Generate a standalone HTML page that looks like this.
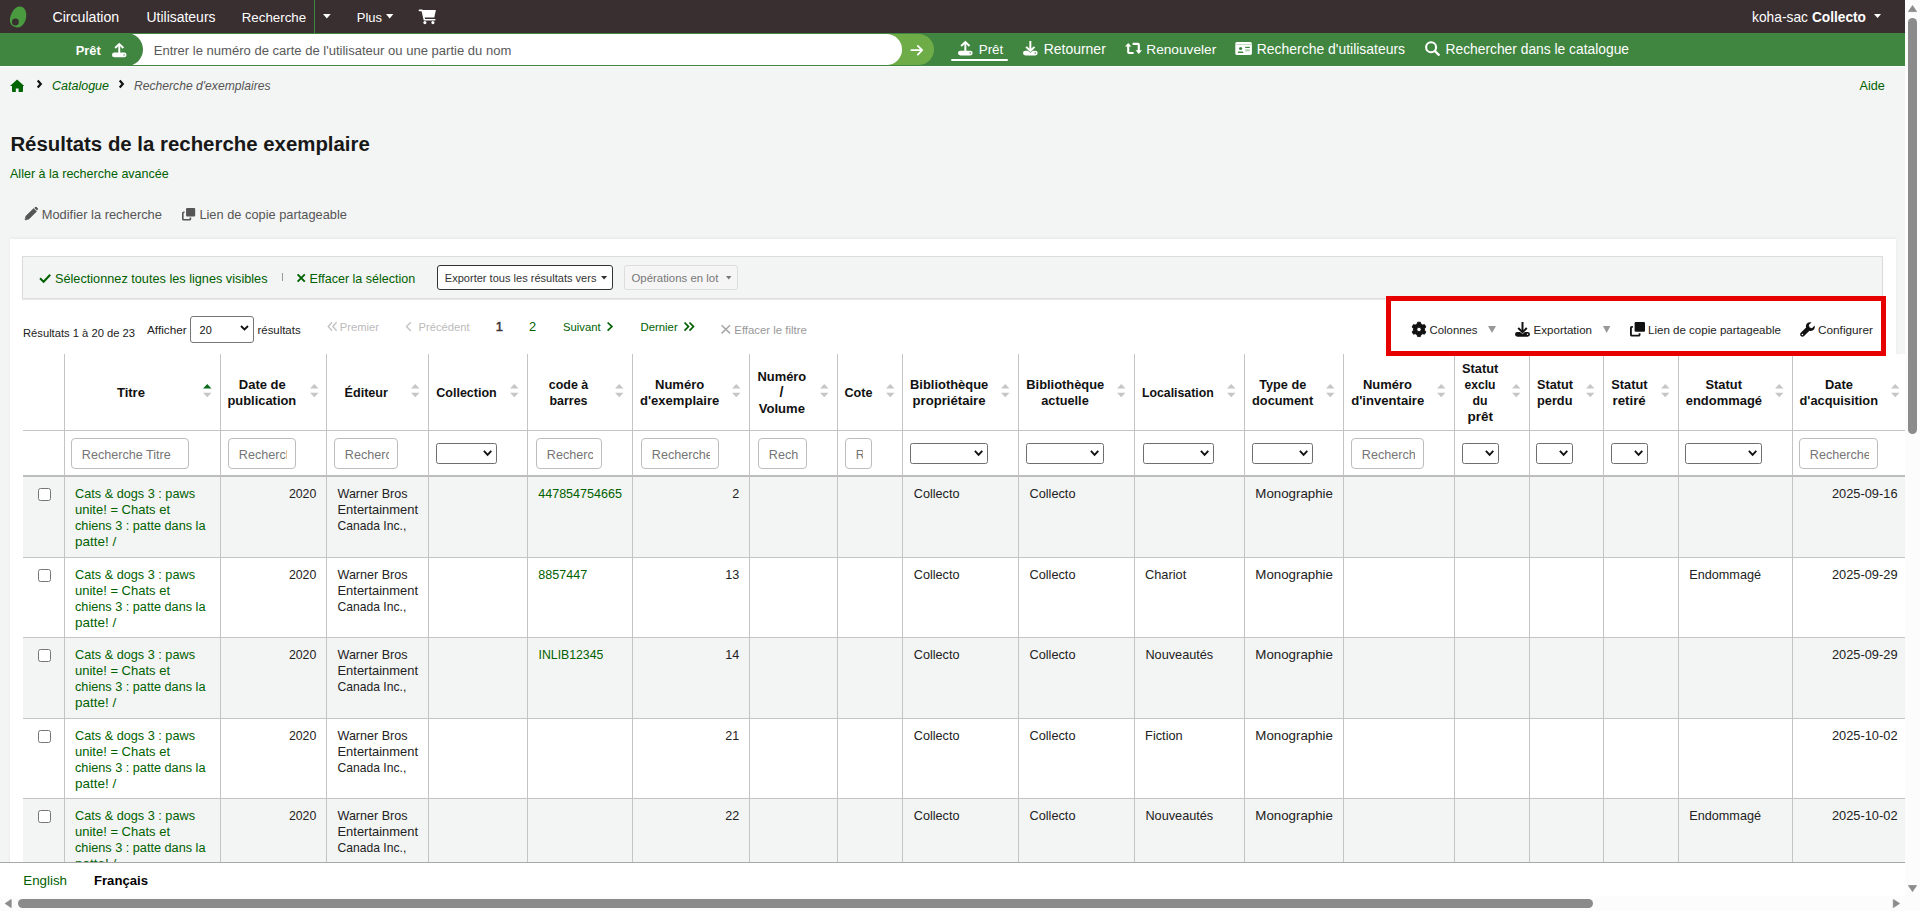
<!DOCTYPE html>
<html><head><meta charset="utf-8"><title>Koha</title>
<style>
html,body{margin:0;padding:0;width:1920px;height:911px;overflow:hidden;background:#f3f4f4;font-family:"Liberation Sans",sans-serif;}
.a{position:absolute;box-sizing:border-box;}
.t{position:absolute;white-space:pre;line-height:1;}
svg.a{overflow:visible;}
text{font-family:"Liberation Sans",sans-serif;white-space:pre;}
</style></head><body>
<div class="a" style="left:0px;top:0px;width:1920px;height:33px;background:#392e30"></div>
<svg class="a" style="left:6px;top:4px;width:24px;height:26px;" viewBox="6 4 24 26"><path d="M20.6 6.6 C24.6 7.3 26.6 11.3 26.3 16 C26 21.6 22.6 27.4 17.6 27.4 C13.2 27.4 10 24.6 9.9 20.6 C9.8 14.2 14.6 5.9 20.6 6.6 Z" fill="#4a9a3f"/><circle cx="15.4" cy="22" r="3.4" fill="#392e30"/></svg>
<svg class="a" style="left:49px;top:5px;width:74px;height:23px" viewBox="49 5 74 23"><text x="52.50" y="22" font-size="14.116" font-weight="normal" font-style="normal" fill="#fff" textLength="66.69" lengthAdjust="spacingAndGlyphs" >Circulation</text></svg>
<svg class="a" style="left:143px;top:5px;width:77px;height:23px" viewBox="143 5 77 23"><text x="146.50" y="22" font-size="13.953" font-weight="normal" font-style="normal" fill="#fff" textLength="69.01" lengthAdjust="spacingAndGlyphs" >Utilisateurs</text></svg>
<svg class="a" style="left:238px;top:5px;width:72px;height:22px" viewBox="238 5 72 22"><text x="241.70" y="22" font-size="13.340" font-weight="normal" font-style="normal" fill="#fff" textLength="64.51" lengthAdjust="spacingAndGlyphs" >Recherche</text></svg>
<svg class="a" style="left:353px;top:6px;width:33px;height:22px" viewBox="353 6 33 22"><text x="356.80" y="22" font-size="12.956" font-weight="normal" font-style="normal" fill="#fff" textLength="25.21" lengthAdjust="spacingAndGlyphs" >Plus</text></svg>
<div class="a" style="left:314px;top:0px;width:1px;height:33px;background:#408540"></div>
<svg class="a" style="left:323.3px;top:14px;width:7.699999999999989px;height:4.5px;" viewBox="0 0 10 5" preserveAspectRatio="none"><path d="M0 0 L10 0 L5 5 Z" fill="#fff"/></svg>
<svg class="a" style="left:386.3px;top:14px;width:7.399999999999977px;height:4.5px;" viewBox="0 0 10 5" preserveAspectRatio="none"><path d="M0 0 L10 0 L5 5 Z" fill="#fff"/></svg>
<svg class="a" style="left:418px;top:8px;width:20px;height:18px;" viewBox="418 8 20 18"><path d="M419.4 10.4 L422.2 10.4 L424.4 19.7 L434.8 19.7" fill="none" stroke="#fff" stroke-width="1.6" stroke-linejoin="round" stroke-linecap="round"/><path d="M422.4 9.9 L435.9 9.9 L434.3 17.6 L424.1 17.6 Z" fill="#fff"/><circle cx="424.9" cy="22.6" r="1.55" fill="#fff"/><circle cx="432.9" cy="22.6" r="1.55" fill="#fff"/></svg>
<svg class="a" style="left:1749px;top:4px;width:63px;height:23px" viewBox="1749 4 63 23"><text x="1752.00" y="21.5" font-size="13.793" font-weight="normal" font-style="normal" fill="#fff" textLength="55.97" lengthAdjust="spacingAndGlyphs" >koha-sac</text></svg>
<svg class="a" style="left:1808px;top:5px;width:62px;height:23px" viewBox="1808 5 62 23"><text x="1811.90" y="21.5" font-size="13.714" font-weight="bold" font-style="normal" fill="#fff" textLength="54.10" lengthAdjust="spacingAndGlyphs" >Collecto</text></svg>
<svg class="a" style="left:1874.4px;top:13.5px;width:7.099999999999909px;height:4.0px;" viewBox="0 0 10 5" preserveAspectRatio="none"><path d="M0 0 L10 0 L5 5 Z" fill="#fff"/></svg>
<div class="a" style="left:0px;top:33px;width:1905px;height:33px;background:#408540"></div>
<div class="a" style="left:0px;top:66px;width:1905px;height:1px;background:#fbfbfb"></div>
<div class="a" style="left:875px;top:34px;width:59px;height:31px;background:#6eac48;border-radius:0 15.5px 15.5px 0"></div>
<div class="a" style="left:130px;top:34px;width:772px;height:31px;background:#fff;border-radius:0 15.5px 15.5px 0"></div>
<div class="a" style="left:0px;top:33px;width:143px;height:33px;background:#408540;border-radius:0 16.5px 16.5px 0"></div>
<svg class="a" style="left:72px;top:39px;width:33px;height:21px" viewBox="72 39 33 21"><text x="75.70" y="54.5" font-size="12.905" font-weight="bold" font-style="normal" fill="#fff" textLength="25.11" lengthAdjust="spacingAndGlyphs" >Prêt</text></svg>
<svg class="a" style="left:112px;top:42.5px;width:14.5px;height:14.5px;" viewBox="0 0 15 15" preserveAspectRatio="none"><path d="M3.2 5.2 L7.5 1.1 L11.8 5.2" fill="none" stroke="#fff" stroke-width="2"/><path d="M7.5 1.5 L7.5 11" stroke="#fff" stroke-width="2"/><rect x="0" y="9.9" width="15" height="4.9" rx="2.45" fill="#fff"/><circle cx="12.5" cy="12.3" r="0.75" fill="#408540"/></svg>
<svg class="a" style="left:150px;top:38px;width:365px;height:22px" viewBox="150 38 365 22"><text x="153.70" y="54.5" font-size="13.037" font-weight="normal" font-style="normal" fill="#595959" textLength="357.59" lengthAdjust="spacingAndGlyphs" >Entrer le numéro de carte de l'utilisateur ou une partie du nom</text></svg>
<svg class="a" style="left:909px;top:44px;width:16px;height:13px;" viewBox="909 44 16 13"><path d="M911.3 50.2 L922 50.2 M917.8 45.8 L922.2 50.2 L917.8 54.6" fill="none" stroke="#fff" stroke-width="1.7" stroke-linecap="round" stroke-linejoin="round"/></svg>
<svg class="a" style="left:958px;top:41.4px;width:14.700000000000045px;height:14.600000000000001px;" viewBox="0 0 15 15" preserveAspectRatio="none"><path d="M3.2 5.2 L7.5 1.1 L11.8 5.2" fill="none" stroke="#fff" stroke-width="2"/><path d="M7.5 1.5 L7.5 11" stroke="#fff" stroke-width="2"/><rect x="0" y="9.9" width="15" height="4.9" rx="2.45" fill="#fff"/><circle cx="12.5" cy="12.3" r="0.75" fill="#408540"/></svg>
<svg class="a" style="left:975px;top:37px;width:32px;height:22px" viewBox="975 37 32 22"><text x="978.75" y="53.75" font-size="13.351" font-weight="normal" font-style="normal" fill="#fff" textLength="24.49" lengthAdjust="spacingAndGlyphs" >Prêt</text></svg>
<div class="a" style="left:951px;top:58.5px;width:57px;height:2.5px;background:#fff;border-radius:2px"></div>
<svg class="a" style="left:1023px;top:41.4px;width:14.700000000000045px;height:14.600000000000001px;" viewBox="0 0 15 15" preserveAspectRatio="none"><path d="M3.2 6 L7.5 10.1 L11.8 6" fill="none" stroke="#fff" stroke-width="2"/><path d="M7.5 0 L7.5 10" stroke="#fff" stroke-width="2"/><path d="M0 12.35 A2.45 2.45 0 0 1 2.45 9.9 L5 9.9 L7.5 12 L10 9.9 L12.55 9.9 A2.45 2.45 0 0 1 12.55 14.8 L2.45 14.8 A2.45 2.45 0 0 1 0 12.35 Z" fill="#fff"/><circle cx="12.5" cy="12.3" r="0.75" fill="#408540"/></svg>
<svg class="a" style="left:1040px;top:37px;width:70px;height:23px" viewBox="1040 37 70 23"><text x="1043.75" y="53.75" font-size="13.948" font-weight="normal" font-style="normal" fill="#fff" textLength="62.03" lengthAdjust="spacingAndGlyphs" >Retourner</text></svg>
<svg class="a" style="left:1124px;top:42px;width:19px;height:13px;" viewBox="1124 42 19 13"><path d="M1125 46.6 L1128.2 42.9 L1131.4 46.6 Z" fill="#fff"/><path d="M1128.2 45.5 L1128.2 52.3 Q1128.2 53 1129 53 L1133.6 53" fill="none" stroke="#fff" stroke-width="2.1"/><path d="M1142 50.2 L1138.8 53.9 L1135.6 50.2 Z" fill="#fff"/><path d="M1132.6 43.9 L1138 43.9 Q1138.8 43.9 1138.8 44.7 L1138.8 51.3" fill="none" stroke="#fff" stroke-width="2.1"/></svg>
<svg class="a" style="left:1143px;top:37px;width:77px;height:23px" viewBox="1143 37 77 23"><text x="1146.25" y="53.75" font-size="13.685" font-weight="normal" font-style="normal" fill="#fff" textLength="69.99" lengthAdjust="spacingAndGlyphs" >Renouveler</text></svg>
<svg class="a" style="left:1234px;top:41px;width:19px;height:15px;" viewBox="1234 41 19 15"><rect x="1235.3" y="42" width="16.6" height="12.9" rx="1.6" fill="#fff"/><rect x="1235.3" y="44.1" width="16.6" height="0.6" fill="#9cc49c"/><circle cx="1240.6" cy="48.5" r="1.6" fill="#408540"/><rect x="1237.8" y="51.6" width="5.6" height="1.4" rx="0.7" fill="#408540"/><rect x="1245.2" y="46.8" width="4.6" height="1.2" fill="#408540"/><rect x="1245.2" y="49.2" width="4.6" height="2.2" fill="#b5d3b5"/></svg>
<svg class="a" style="left:1253px;top:37px;width:156px;height:23px" viewBox="1253 37 156 23"><text x="1256.75" y="53.75" font-size="13.933" font-weight="normal" font-style="normal" fill="#fff" textLength="148.26" lengthAdjust="spacingAndGlyphs" >Recherche d'utilisateurs</text></svg>
<svg class="a" style="left:1423px;top:39px;width:19px;height:19px;" viewBox="1423 39 19 19"><circle cx="1431.1" cy="47.3" r="5" fill="none" stroke="#fff" stroke-width="2.1"/><path d="M1434.9 51.1 L1438.8 54.8" stroke="#fff" stroke-width="2.3" stroke-linecap="round"/></svg>
<svg class="a" style="left:1442px;top:37px;width:191px;height:23px" viewBox="1442 37 191 23"><text x="1445.50" y="53.75" font-size="13.813" font-weight="normal" font-style="normal" fill="#fff" textLength="183.52" lengthAdjust="spacingAndGlyphs" >Rechercher dans le catalogue</text></svg>
<svg class="a" style="left:9px;top:78px;width:17px;height:15px;" viewBox="9 78 17 15"><path d="M17.1 79.6 L24.2 85.9 L23 85.9 L23 91 Q23 91.9 22.1 91.9 L18.6 91.9 L18.6 88.4 L15.8 88.4 L15.8 91.9 L12.9 91.9 Q12 91.9 12 91 L12 85.9 L10 85.9 Z" fill="#006400"/></svg>
<svg class="a" style="left:36.6px;top:80px;width:4.600000000000001px;height:8px;" viewBox="0 0 4 7" preserveAspectRatio="none"><path d="M0.6 0.5 L3.3 3.5 L0.6 6.5" fill="none" stroke="#111" stroke-width="1.9"/></svg>
<svg class="a" style="left:49px;top:75px;width:64px;height:21px" viewBox="49 75 64 21"><text x="52.00" y="90" font-size="12.500" font-weight="normal" font-style="italic" fill="#006100" textLength="56.99" lengthAdjust="spacingAndGlyphs" >Catalogue</text></svg>
<svg class="a" style="left:118.6px;top:80px;width:4.6000000000000085px;height:8px;" viewBox="0 0 4 7" preserveAspectRatio="none"><path d="M0.6 0.5 L3.3 3.5 L0.6 6.5" fill="none" stroke="#111" stroke-width="1.9"/></svg>
<svg class="a" style="left:131px;top:75px;width:144px;height:20px" viewBox="131 75 144 20"><text x="134.00" y="90" font-size="12.133" font-weight="normal" font-style="italic" fill="#555" textLength="136.53" lengthAdjust="spacingAndGlyphs" >Recherche d'exemplaires</text></svg>
<svg class="a" style="left:1856px;top:74px;width:33px;height:21px" viewBox="1856 74 33 21"><text x="1859.60" y="89.8" font-size="12.600" font-weight="normal" font-style="normal" fill="#006100" textLength="25.22" lengthAdjust="spacingAndGlyphs" >Aide</text></svg>
<svg class="a" style="left:7px;top:126px;width:367px;height:34px" viewBox="7 126 367 34"><text x="10.40" y="151.25" font-size="20.397" font-weight="bold" font-style="normal" fill="#181818" textLength="359.41" lengthAdjust="spacingAndGlyphs" >Résultats de la recherche exemplaire</text></svg>
<svg class="a" style="left:7px;top:162px;width:166px;height:21px" viewBox="7 162 166 21"><text x="10.00" y="178" font-size="12.525" font-weight="normal" font-style="normal" fill="#006100" textLength="158.74" lengthAdjust="spacingAndGlyphs" >Aller à la recherche avancée</text></svg>
<svg class="a" style="left:22px;top:205px;width:18px;height:18px;" viewBox="22 205 18 18"><path d="M25 220 L25.9 216.1 L33.6 208.6 L36.5 211.5 L28.9 219.1 Z" fill="#555" stroke="#555" stroke-width="0.6" stroke-linejoin="round"/><path d="M34.3 207.9 L35.2 207.1 Q36 206.5 36.8 207.3 L37.7 208.2 Q38.4 209 37.7 209.8 L36.9 210.6 Z" fill="#555"/></svg>
<svg class="a" style="left:38px;top:203px;width:128px;height:21px" viewBox="38 203 128 21"><text x="41.70" y="219" font-size="12.880" font-weight="normal" font-style="normal" fill="#555" textLength="120.27" lengthAdjust="spacingAndGlyphs" >Modifier la recherche</text></svg>
<svg class="a" style="left:182px;top:207.8px;width:13.199999999999989px;height:12.5px;" viewBox="0 0 13 12.5" preserveAspectRatio="none"><rect x="4" y="0" width="9" height="8.5" rx="1" fill="#555"/><path d="M2.5 4.2 L1.6 4.2 Q0.8 4.2 0.8 5 L0.8 11 Q0.8 11.8 1.6 11.8 L7.5 11.8 Q8.3 11.8 8.3 11 L8.3 9.6" fill="none" stroke="#555" stroke-width="1.6"/></svg>
<svg class="a" style="left:196px;top:203px;width:155px;height:21px" viewBox="196 203 155 21"><text x="199.40" y="219" font-size="12.815" font-weight="normal" font-style="normal" fill="#555" textLength="147.49" lengthAdjust="spacingAndGlyphs" >Lien de copie partageable</text></svg>
<div class="a" style="left:10px;top:239px;width:1886px;height:672px;background:#fff;box-shadow:0 -1px 3px rgba(0,0,0,0.06)"></div>
<div class="a" style="left:22px;top:256px;width:1861px;height:43px;background:#f3f4f4;border:1px solid #dcdcdc;box-shadow:0 1px 1px rgba(0,0,0,0.08)"></div>
<svg class="a" style="left:37px;top:271px;width:16px;height:14px;" viewBox="37 271 16 14"><path d="M40 278.3 L43.6 281.8 L50.2 274.8" fill="none" stroke="#006100" stroke-width="2"/></svg>
<svg class="a" style="left:52px;top:268px;width:220px;height:21px" viewBox="52 268 220 21"><text x="55.00" y="283.3" font-size="12.702" font-weight="normal" font-style="normal" fill="#006100" textLength="212.52" lengthAdjust="spacingAndGlyphs" >Sélectionnez toutes les lignes visibles</text></svg>
<div class="a" style="left:282px;top:272.5px;width:1px;height:8.5px;background:#999"></div>
<svg class="a" style="left:295px;top:272px;width:13px;height:12px;" viewBox="295 272 13 12"><path d="M297.6 274.4 L304.8 281.6 M304.8 274.4 L297.6 281.6" stroke="#006100" stroke-width="1.9"/></svg>
<svg class="a" style="left:306px;top:268px;width:113px;height:21px" viewBox="306 268 113 21"><text x="309.60" y="283.3" font-size="12.527" font-weight="normal" font-style="normal" fill="#006100" textLength="105.61" lengthAdjust="spacingAndGlyphs" >Effacer la sélection</text></svg>
<div class="a" style="left:437px;top:265px;width:176px;height:25px;background:#fff;border:1px solid #333;border-radius:3px"></div>
<svg class="a" style="left:441px;top:269px;width:159px;height:18px" viewBox="441 269 159 18"><text x="444.80" y="282.4" font-size="11.049" font-weight="normal" font-style="normal" fill="#333" textLength="151.68" lengthAdjust="spacingAndGlyphs" >Exporter tous les résultats vers</text></svg>
<svg class="a" style="left:600.8px;top:276px;width:6.2000000000000455px;height:3.5px;" viewBox="0 0 10 5" preserveAspectRatio="none"><path d="M0 0 L10 0 L5 5 Z" fill="#333"/></svg>
<div class="a" style="left:624px;top:265px;width:114px;height:25px;background:#f5f5f5;border:1px solid #ddd;border-radius:3px"></div>
<svg class="a" style="left:628px;top:268px;width:94px;height:19px" viewBox="628 268 94 19"><text x="631.50" y="282.4" font-size="11.399" font-weight="normal" font-style="normal" fill="#777" textLength="86.81" lengthAdjust="spacingAndGlyphs" >Opérations en lot</text></svg>
<svg class="a" style="left:725.5px;top:276px;width:5.5px;height:3.5px;" viewBox="0 0 10 5" preserveAspectRatio="none"><path d="M0 0 L10 0 L5 5 Z" fill="#777"/></svg>
<svg class="a" style="left:20px;top:323px;width:120px;height:19px" viewBox="20 323 120 19"><text x="23.00" y="336.5" font-size="11.194" font-weight="normal" font-style="normal" fill="#222" textLength="112.02" lengthAdjust="spacingAndGlyphs" >Résultats 1 à 20 de 23</text></svg>
<svg class="a" style="left:144px;top:320px;width:47px;height:20px" viewBox="144 320 47 20"><text x="147.00" y="334.4" font-size="11.780" font-weight="normal" font-style="normal" fill="#222" textLength="39.73" lengthAdjust="spacingAndGlyphs" >Afficher</text></svg>
<div class="a" style="left:190px;top:315.5px;width:63.5px;height:27.0px;background:#fff;border:1px solid #767676;border-radius:3px"></div>
<svg class="a" style="left:196px;top:321px;width:20px;height:18px" viewBox="196 321 20 18"><text x="199.60" y="334.4" font-size="10.901" font-weight="normal" font-style="normal" fill="#111" textLength="12.13" lengthAdjust="spacingAndGlyphs" >20</text></svg>
<svg class="a" style="left:240px;top:325px;width:9px;height:6px;" viewBox="0 0 9 6" preserveAspectRatio="none"><path d="M1 1 L4.5 4.5 L8 1" fill="none" stroke="#111" stroke-width="1.8"/></svg>
<svg class="a" style="left:254px;top:320px;width:51px;height:19px" viewBox="254 320 51 19"><text x="257.50" y="334.4" font-size="11.402" font-weight="normal" font-style="normal" fill="#222" textLength="43.09" lengthAdjust="spacingAndGlyphs" >résultats</text></svg>
<svg class="a" style="left:325px;top:320px;width:15px;height:13px;" viewBox="325 320 15 13"><path d="M332 322.3 L328.2 326.5 L332 330.7 M336.6 322.3 L332.8 326.5 L336.6 330.7" fill="none" stroke="#c2c2c2" stroke-width="1.35"/></svg>
<svg class="a" style="left:336px;top:317px;width:47px;height:19px" viewBox="336 317 47 19"><text x="339.70" y="331" font-size="11.229" font-weight="normal" font-style="normal" fill="#bbb" textLength="39.31" lengthAdjust="spacingAndGlyphs" >Premier</text></svg>
<svg class="a" style="left:403px;top:320px;width:11px;height:13px;" viewBox="403 320 11 13"><path d="M410.8 322.3 L406.5 326.6 L410.8 330.9" fill="none" stroke="#c2c2c2" stroke-width="1.35"/></svg>
<svg class="a" style="left:415px;top:317px;width:58px;height:19px" viewBox="415 317 58 19"><text x="418.60" y="331" font-size="11.184" font-weight="normal" font-style="normal" fill="#bbb" textLength="50.99" lengthAdjust="spacingAndGlyphs" >Précédent</text></svg>
<svg class="a" style="left:492px;top:315px;width:15px;height:22px" viewBox="492 315 15 22"><text x="495.80" y="331" font-size="13.000" font-weight="normal" font-style="normal" fill="#3d3535" textLength="7.23" lengthAdjust="spacingAndGlyphs" stroke="#3d3535" stroke-width="0.5">1</text></svg>
<svg class="a" style="left:526px;top:315px;width:15px;height:21px" viewBox="526 315 15 21"><text x="529.00" y="331" font-size="12.800" font-weight="normal" font-style="normal" fill="#006100" textLength="7.12" lengthAdjust="spacingAndGlyphs" >2</text></svg>
<svg class="a" style="left:560px;top:317px;width:45px;height:19px" viewBox="560 317 45 19"><text x="563.00" y="331" font-size="11.274" font-weight="normal" font-style="normal" fill="#006100" textLength="37.61" lengthAdjust="spacingAndGlyphs" >Suivant</text></svg>
<svg class="a" style="left:605px;top:320px;width:10px;height:13px;" viewBox="605 320 10 13"><path d="M607.6 322.5 L611.9 326.6 L607.6 330.7" fill="none" stroke="#006100" stroke-width="1.7"/></svg>
<svg class="a" style="left:637px;top:317px;width:45px;height:19px" viewBox="637 317 45 19"><text x="640.50" y="331" font-size="11.341" font-weight="normal" font-style="normal" fill="#006100" textLength="37.19" lengthAdjust="spacingAndGlyphs" >Dernier</text></svg>
<svg class="a" style="left:682px;top:320px;width:14px;height:13px;" viewBox="682 320 14 13"><path d="M684.5 322.5 L688.5 326.6 L684.5 330.7 M689.5 322.5 L693.5 326.6 L689.5 330.7" fill="none" stroke="#006100" stroke-width="1.7"/></svg>
<svg class="a" style="left:719px;top:322px;width:14px;height:14px;" viewBox="719 322 14 14"><path d="M721.6 325.3 L730 333.4 M730 325.3 L721.6 333.4" stroke="#a8a8a8" stroke-width="1.5"/></svg>
<svg class="a" style="left:731px;top:320px;width:80px;height:19px" viewBox="731 320 80 19"><text x="734.30" y="334.2" font-size="11.388" font-weight="normal" font-style="normal" fill="#999" textLength="72.58" lengthAdjust="spacingAndGlyphs" >Effacer le filtre</text></svg>
<svg class="a" style="left:1410px;top:320px;width:18px;height:19px;" viewBox="1410 320 18 19"><path d="M1417.14 324.01 L1417.61 322.23 L1420.39 322.23 L1420.86 324.01 L1422.74 325.10 L1424.51 324.61 L1425.90 327.02 L1424.60 328.31 L1424.60 330.49 L1425.90 331.78 L1424.51 334.19 L1422.74 333.70 L1420.86 334.79 L1420.39 336.57 L1417.61 336.57 L1417.14 334.79 L1415.26 333.70 L1413.49 334.19 L1412.10 331.78 L1413.40 330.49 L1413.40 328.31 L1412.10 327.02 L1413.49 324.61 L1415.26 325.10 Z M1421.2 329.4 A2.2 2.2 0 1 0 1416.8 329.4 A2.2 2.2 0 1 0 1421.2 329.4 Z" fill="#111" fill-rule="evenodd" stroke="#111" stroke-width="0.9" stroke-linejoin="round"/></svg>
<svg class="a" style="left:1426px;top:320px;width:55px;height:19px" viewBox="1426 320 55 19"><text x="1429.60" y="334" font-size="11.337" font-weight="normal" font-style="normal" fill="#222" textLength="47.90" lengthAdjust="spacingAndGlyphs" >Colonnes</text></svg>
<svg class="a" style="left:1488px;top:325.5px;width:8px;height:7.0px;" viewBox="0 0 10 5" preserveAspectRatio="none"><path d="M0 0 L10 0 L5 5 Z" fill="#999"/></svg>
<svg class="a" style="left:1515px;top:322px;width:15px;height:15px;" viewBox="0 0 15 15" preserveAspectRatio="none"><path d="M3.2 6 L7.5 10.1 L11.8 6" fill="none" stroke="#111" stroke-width="2"/><path d="M7.5 0 L7.5 10" stroke="#111" stroke-width="2"/><path d="M0 12.35 A2.45 2.45 0 0 1 2.45 9.9 L5 9.9 L7.5 12 L10 9.9 L12.55 9.9 A2.45 2.45 0 0 1 12.55 14.8 L2.45 14.8 A2.45 2.45 0 0 1 0 12.35 Z" fill="#111"/><circle cx="12.5" cy="12.3" r="0.75" fill="#fff"/></svg>
<svg class="a" style="left:1530px;top:320px;width:66px;height:19px" viewBox="1530 320 66 19"><text x="1533.60" y="334" font-size="11.542" font-weight="normal" font-style="normal" fill="#222" textLength="58.39" lengthAdjust="spacingAndGlyphs" >Exportation</text></svg>
<svg class="a" style="left:1602.6px;top:325.5px;width:7.400000000000091px;height:7.0px;" viewBox="0 0 10 5" preserveAspectRatio="none"><path d="M0 0 L10 0 L5 5 Z" fill="#999"/></svg>
<svg class="a" style="left:1630px;top:322px;width:15px;height:14.5px;" viewBox="0 0 13 12.5" preserveAspectRatio="none"><rect x="4" y="0" width="9" height="8.5" rx="1" fill="#111"/><path d="M2.5 4.2 L1.6 4.2 Q0.8 4.2 0.8 5 L0.8 11 Q0.8 11.8 1.6 11.8 L7.5 11.8 Q8.3 11.8 8.3 11 L8.3 9.6" fill="none" stroke="#111" stroke-width="1.6"/></svg>
<svg class="a" style="left:1645px;top:320px;width:140px;height:19px" viewBox="1645 320 140 19"><text x="1648.00" y="334" font-size="11.546" font-weight="normal" font-style="normal" fill="#222" textLength="132.90" lengthAdjust="spacingAndGlyphs" >Lien de copie partageable</text></svg>
<svg class="a" style="left:1800px;top:322px;width:15px;height:15px;" viewBox="0 0 15 15" preserveAspectRatio="none"><path d="M14.6 3.6 L12 6.2 L9.6 5.4 L8.8 3 L11.4 0.4 C9.2 -0.4 6.6 0.8 6 3.2 C5.8 4 5.9 4.8 6.1 5.4 L0.8 10.7 C-0.1 11.6 -0.1 13.1 0.8 14 C1.7 14.9 3.2 14.9 4.1 14 L9.4 8.7 C10.2 9 11.1 9 12 8.8 C14.2 8.1 15.4 5.8 14.6 3.6 Z" fill="#111"/><circle cx="2.4" cy="12.5" r="0.8" fill="#fff"/></svg>
<svg class="a" style="left:1815px;top:319px;width:62px;height:20px" viewBox="1815 319 62 20"><text x="1818.00" y="334" font-size="11.777" font-weight="normal" font-style="normal" fill="#222" textLength="54.99" lengthAdjust="spacingAndGlyphs" >Configurer</text></svg>
<div class="a" style="left:23px;top:354px;width:1882px;height:508px;background:#fff"></div>
<div class="a" style="left:23px;top:477px;width:1882px;height:80px;background:#f3f4f4"></div>
<div class="a" style="left:23px;top:638px;width:1882px;height:80px;background:#f3f4f4"></div>
<div class="a" style="left:23px;top:799px;width:1882px;height:63px;background:#f3f4f4"></div>
<div class="a" style="left:64px;top:354px;width:1px;height:508px;background:#c4c4c4"></div>
<div class="a" style="left:220px;top:354px;width:1px;height:508px;background:#c4c4c4"></div>
<div class="a" style="left:326px;top:354px;width:1px;height:508px;background:#c4c4c4"></div>
<div class="a" style="left:428px;top:354px;width:1px;height:508px;background:#c4c4c4"></div>
<div class="a" style="left:527px;top:354px;width:1px;height:508px;background:#c4c4c4"></div>
<div class="a" style="left:632px;top:354px;width:1px;height:508px;background:#c4c4c4"></div>
<div class="a" style="left:749px;top:354px;width:1px;height:508px;background:#c4c4c4"></div>
<div class="a" style="left:837px;top:354px;width:1px;height:508px;background:#c4c4c4"></div>
<div class="a" style="left:902px;top:354px;width:1px;height:508px;background:#c4c4c4"></div>
<div class="a" style="left:1018px;top:354px;width:1px;height:508px;background:#c4c4c4"></div>
<div class="a" style="left:1134px;top:354px;width:1px;height:508px;background:#c4c4c4"></div>
<div class="a" style="left:1244px;top:354px;width:1px;height:508px;background:#c4c4c4"></div>
<div class="a" style="left:1343px;top:354px;width:1px;height:508px;background:#c4c4c4"></div>
<div class="a" style="left:1454px;top:354px;width:1px;height:508px;background:#c4c4c4"></div>
<div class="a" style="left:1529px;top:354px;width:1px;height:508px;background:#c4c4c4"></div>
<div class="a" style="left:1603px;top:354px;width:1px;height:508px;background:#c4c4c4"></div>
<div class="a" style="left:1678px;top:354px;width:1px;height:508px;background:#c4c4c4"></div>
<div class="a" style="left:1792px;top:354px;width:1px;height:508px;background:#c4c4c4"></div>
<div class="a" style="left:23px;top:430px;width:1882px;height:1px;background:#c4c4c4"></div>
<div class="a" style="left:23px;top:475px;width:1882px;height:2px;background:#bdbdbd"></div>
<div class="a" style="left:23px;top:557px;width:1882px;height:1px;background:#c4c4c4"></div>
<div class="a" style="left:23px;top:637px;width:1882px;height:1px;background:#c4c4c4"></div>
<div class="a" style="left:23px;top:718px;width:1882px;height:1px;background:#c4c4c4"></div>
<div class="a" style="left:23px;top:798px;width:1882px;height:1px;background:#c4c4c4"></div>
<svg class="a" style="left:113px;top:380px;width:36px;height:22px" viewBox="113 380 36 22"><text x="116.90" y="396.6" font-size="13.070" font-weight="bold" font-style="normal" fill="#111" textLength="28.09" lengthAdjust="spacingAndGlyphs" >Titre</text></svg>
<svg class="a" style="left:203px;top:384px;width:8.5px;height:13.199999999999989px;" viewBox="0 0 8.5 13.2" preserveAspectRatio="none"><path d="M0 4.5 L4.25 0 L8.5 4.5 Z" fill="#0b6b1e"/><path d="M0 8.7 L8.5 8.7 L4.25 13.2 Z" fill="#c6c6c6"/></svg>
<svg class="a" style="left:235px;top:373px;width:55px;height:22px" viewBox="235 373 55 22"><text x="238.75" y="388.75" font-size="13.019" font-weight="bold" font-style="normal" fill="#111" textLength="47.03" lengthAdjust="spacingAndGlyphs" >Date de</text></svg>
<svg class="a" style="left:224px;top:389px;width:76px;height:21px" viewBox="224 389 76 21"><text x="227.50" y="405" font-size="12.887" font-weight="bold" font-style="normal" fill="#111" textLength="68.73" lengthAdjust="spacingAndGlyphs" >publication</text></svg>
<svg class="a" style="left:309.5px;top:384px;width:8.5px;height:13.199999999999989px;" viewBox="0 0 8.5 13.2" preserveAspectRatio="none"><path d="M0 4.5 L4.25 0 L8.5 4.5 Z" fill="#c6c6c6"/><path d="M0 8.7 L8.5 8.7 L4.25 13.2 Z" fill="#c6c6c6"/></svg>
<svg class="a" style="left:341px;top:381px;width:51px;height:21px" viewBox="341 381 51 21"><text x="344.50" y="397" font-size="12.627" font-weight="bold" font-style="normal" fill="#111" textLength="43.50" lengthAdjust="spacingAndGlyphs" >Éditeur</text></svg>
<svg class="a" style="left:411.25px;top:384px;width:8.5px;height:13.199999999999989px;" viewBox="0 0 8.5 13.2" preserveAspectRatio="none"><path d="M0 4.5 L4.25 0 L8.5 4.5 Z" fill="#c6c6c6"/><path d="M0 8.7 L8.5 8.7 L4.25 13.2 Z" fill="#c6c6c6"/></svg>
<svg class="a" style="left:433px;top:381px;width:68px;height:21px" viewBox="433 381 68 21"><text x="436.25" y="397" font-size="12.513" font-weight="bold" font-style="normal" fill="#111" textLength="60.48" lengthAdjust="spacingAndGlyphs" >Collection</text></svg>
<svg class="a" style="left:510px;top:384px;width:8.5px;height:13.199999999999989px;" viewBox="0 0 8.5 13.2" preserveAspectRatio="none"><path d="M0 4.5 L4.25 0 L8.5 4.5 Z" fill="#c6c6c6"/><path d="M0 8.7 L8.5 8.7 L4.25 13.2 Z" fill="#c6c6c6"/></svg>
<svg class="a" style="left:545px;top:373px;width:47px;height:21px" viewBox="545 373 47 21"><text x="548.75" y="388.75" font-size="12.461" font-weight="bold" font-style="normal" fill="#111" textLength="39.48" lengthAdjust="spacingAndGlyphs" >code à</text></svg>
<svg class="a" style="left:546px;top:390px;width:45px;height:21px" viewBox="546 390 45 21"><text x="549.50" y="405" font-size="12.418" font-weight="bold" font-style="normal" fill="#111" textLength="37.97" lengthAdjust="spacingAndGlyphs" >barres</text></svg>
<svg class="a" style="left:615px;top:384px;width:8.5px;height:13.199999999999989px;" viewBox="0 0 8.5 13.2" preserveAspectRatio="none"><path d="M0 4.5 L4.25 0 L8.5 4.5 Z" fill="#c6c6c6"/><path d="M0 8.7 L8.5 8.7 L4.25 13.2 Z" fill="#c6c6c6"/></svg>
<svg class="a" style="left:652px;top:373px;width:57px;height:22px" viewBox="652 373 57 22"><text x="655.00" y="388.75" font-size="13.029" font-weight="bold" font-style="normal" fill="#111" textLength="49.23" lengthAdjust="spacingAndGlyphs" >Numéro</text></svg>
<svg class="a" style="left:637px;top:389px;width:87px;height:22px" viewBox="637 389 87 22"><text x="640.00" y="405" font-size="13.045" font-weight="bold" font-style="normal" fill="#111" textLength="79.24" lengthAdjust="spacingAndGlyphs" >d'exemplaire</text></svg>
<svg class="a" style="left:732px;top:384px;width:8.5px;height:13.199999999999989px;" viewBox="0 0 8.5 13.2" preserveAspectRatio="none"><path d="M0 4.5 L4.25 0 L8.5 4.5 Z" fill="#c6c6c6"/><path d="M0 8.7 L8.5 8.7 L4.25 13.2 Z" fill="#c6c6c6"/></svg>
<svg class="a" style="left:754px;top:365px;width:56px;height:21px" viewBox="754 365 56 21"><text x="757.50" y="380.75" font-size="12.897" font-weight="bold" font-style="normal" fill="#111" textLength="48.73" lengthAdjust="spacingAndGlyphs" >Numéro</text></svg>
<svg class="a" style="left:776px;top:379px;width:11px;height:24px" viewBox="776 379 11 24"><text x="779.50" y="397" font-size="14.286" font-weight="bold" font-style="normal" fill="#111" textLength="3.97" lengthAdjust="spacingAndGlyphs" >/</text></svg>
<svg class="a" style="left:755px;top:397px;width:54px;height:22px" viewBox="755 397 54 22"><text x="758.75" y="413.25" font-size="13.065" font-weight="bold" font-style="normal" fill="#111" textLength="46.22" lengthAdjust="spacingAndGlyphs" >Volume</text></svg>
<svg class="a" style="left:820px;top:384px;width:8.5px;height:13.199999999999989px;" viewBox="0 0 8.5 13.2" preserveAspectRatio="none"><path d="M0 4.5 L4.25 0 L8.5 4.5 Z" fill="#c6c6c6"/><path d="M0 8.7 L8.5 8.7 L4.25 13.2 Z" fill="#c6c6c6"/></svg>
<svg class="a" style="left:841px;top:381px;width:36px;height:21px" viewBox="841 381 36 21"><text x="844.50" y="397" font-size="12.613" font-weight="bold" font-style="normal" fill="#111" textLength="28.03" lengthAdjust="spacingAndGlyphs" >Cote</text></svg>
<svg class="a" style="left:885.5px;top:384px;width:8.5px;height:13.199999999999989px;" viewBox="0 0 8.5 13.2" preserveAspectRatio="none"><path d="M0 4.5 L4.25 0 L8.5 4.5 Z" fill="#c6c6c6"/><path d="M0 8.7 L8.5 8.7 L4.25 13.2 Z" fill="#c6c6c6"/></svg>
<svg class="a" style="left:907px;top:373px;width:86px;height:21px" viewBox="907 373 86 21"><text x="910.00" y="388.75" font-size="12.923" font-weight="bold" font-style="normal" fill="#111" textLength="78.25" lengthAdjust="spacingAndGlyphs" >Bibliothèque</text></svg>
<svg class="a" style="left:909px;top:389px;width:81px;height:22px" viewBox="909 389 81 22"><text x="912.50" y="405" font-size="13.141" font-weight="bold" font-style="normal" fill="#111" textLength="73.03" lengthAdjust="spacingAndGlyphs" >propriétaire</text></svg>
<svg class="a" style="left:1001px;top:384px;width:8.5px;height:13.199999999999989px;" viewBox="0 0 8.5 13.2" preserveAspectRatio="none"><path d="M0 4.5 L4.25 0 L8.5 4.5 Z" fill="#c6c6c6"/><path d="M0 8.7 L8.5 8.7 L4.25 13.2 Z" fill="#c6c6c6"/></svg>
<svg class="a" style="left:1023px;top:373px;width:86px;height:21px" viewBox="1023 373 86 21"><text x="1026.25" y="388.75" font-size="12.882" font-weight="bold" font-style="normal" fill="#111" textLength="78.00" lengthAdjust="spacingAndGlyphs" >Bibliothèque</text></svg>
<svg class="a" style="left:1038px;top:389px;width:55px;height:21px" viewBox="1038 389 55 21"><text x="1041.25" y="405" font-size="12.752" font-weight="bold" font-style="normal" fill="#111" textLength="47.49" lengthAdjust="spacingAndGlyphs" >actuelle</text></svg>
<svg class="a" style="left:1117px;top:384px;width:8.5px;height:13.199999999999989px;" viewBox="0 0 8.5 13.2" preserveAspectRatio="none"><path d="M0 4.5 L4.25 0 L8.5 4.5 Z" fill="#c6c6c6"/><path d="M0 8.7 L8.5 8.7 L4.25 13.2 Z" fill="#c6c6c6"/></svg>
<svg class="a" style="left:1139px;top:382px;width:79px;height:20px" viewBox="1139 382 79 20"><text x="1142.00" y="397" font-size="12.296" font-weight="bold" font-style="normal" fill="#111" textLength="71.75" lengthAdjust="spacingAndGlyphs" >Localisation</text></svg>
<svg class="a" style="left:1227px;top:384px;width:8.5px;height:13.199999999999989px;" viewBox="0 0 8.5 13.2" preserveAspectRatio="none"><path d="M0 4.5 L4.25 0 L8.5 4.5 Z" fill="#c6c6c6"/><path d="M0 8.7 L8.5 8.7 L4.25 13.2 Z" fill="#c6c6c6"/></svg>
<svg class="a" style="left:1256px;top:373px;width:54px;height:21px" viewBox="1256 373 54 21"><text x="1259.25" y="388.75" font-size="12.686" font-weight="bold" font-style="normal" fill="#111" textLength="47.00" lengthAdjust="spacingAndGlyphs" >Type de</text></svg>
<svg class="a" style="left:1249px;top:389px;width:69px;height:21px" viewBox="1249 389 69 21"><text x="1252.00" y="405" font-size="12.814" font-weight="bold" font-style="normal" fill="#111" textLength="61.22" lengthAdjust="spacingAndGlyphs" >document</text></svg>
<svg class="a" style="left:1326.25px;top:384px;width:8.5px;height:13.199999999999989px;" viewBox="0 0 8.5 13.2" preserveAspectRatio="none"><path d="M0 4.5 L4.25 0 L8.5 4.5 Z" fill="#c6c6c6"/><path d="M0 8.7 L8.5 8.7 L4.25 13.2 Z" fill="#c6c6c6"/></svg>
<svg class="a" style="left:1360px;top:373px;width:56px;height:22px" viewBox="1360 373 56 22"><text x="1363.00" y="388.75" font-size="12.963" font-weight="bold" font-style="normal" fill="#111" textLength="48.98" lengthAdjust="spacingAndGlyphs" >Numéro</text></svg>
<svg class="a" style="left:1348px;top:389px;width:80px;height:22px" viewBox="1348 389 80 22"><text x="1351.25" y="405" font-size="13.094" font-weight="bold" font-style="normal" fill="#111" textLength="72.97" lengthAdjust="spacingAndGlyphs" >d'inventaire</text></svg>
<svg class="a" style="left:1437px;top:384px;width:8.5px;height:13.199999999999989px;" viewBox="0 0 8.5 13.2" preserveAspectRatio="none"><path d="M0 4.5 L4.25 0 L8.5 4.5 Z" fill="#c6c6c6"/><path d="M0 8.7 L8.5 8.7 L4.25 13.2 Z" fill="#c6c6c6"/></svg>
<svg class="a" style="left:1459px;top:357px;width:44px;height:21px" viewBox="1459 357 44 21"><text x="1462.00" y="372.5" font-size="12.787" font-weight="bold" font-style="normal" fill="#111" textLength="36.23" lengthAdjust="spacingAndGlyphs" >Statut</text></svg>
<svg class="a" style="left:1461px;top:374px;width:39px;height:20px" viewBox="1461 374 39 20"><text x="1464.50" y="388.75" font-size="12.133" font-weight="bold" font-style="normal" fill="#111" textLength="31.03" lengthAdjust="spacingAndGlyphs" >exclu</text></svg>
<svg class="a" style="left:1469px;top:390px;width:23px;height:20px" viewBox="1469 390 23 20"><text x="1472.50" y="405" font-size="12.295" font-weight="bold" font-style="normal" fill="#111" textLength="15.02" lengthAdjust="spacingAndGlyphs" >du</text></svg>
<svg class="a" style="left:1464px;top:405px;width:33px;height:22px" viewBox="1464 405 33 22"><text x="1467.50" y="421.25" font-size="13.492" font-weight="bold" font-style="normal" fill="#111" textLength="25.49" lengthAdjust="spacingAndGlyphs" >prêt</text></svg>
<svg class="a" style="left:1512px;top:384px;width:8.5px;height:13.199999999999989px;" viewBox="0 0 8.5 13.2" preserveAspectRatio="none"><path d="M0 4.5 L4.25 0 L8.5 4.5 Z" fill="#c6c6c6"/><path d="M0 8.7 L8.5 8.7 L4.25 13.2 Z" fill="#c6c6c6"/></svg>
<svg class="a" style="left:1534px;top:373px;width:43px;height:21px" viewBox="1534 373 43 21"><text x="1537.00" y="388.75" font-size="12.698" font-weight="bold" font-style="normal" fill="#111" textLength="35.98" lengthAdjust="spacingAndGlyphs" >Statut</text></svg>
<svg class="a" style="left:1534px;top:389px;width:43px;height:21px" viewBox="1534 389 43 21"><text x="1537.00" y="405" font-size="12.770" font-weight="bold" font-style="normal" fill="#111" textLength="35.47" lengthAdjust="spacingAndGlyphs" >perdu</text></svg>
<svg class="a" style="left:1586.25px;top:384px;width:8.5px;height:13.199999999999989px;" viewBox="0 0 8.5 13.2" preserveAspectRatio="none"><path d="M0 4.5 L4.25 0 L8.5 4.5 Z" fill="#c6c6c6"/><path d="M0 8.7 L8.5 8.7 L4.25 13.2 Z" fill="#c6c6c6"/></svg>
<svg class="a" style="left:1608px;top:373px;width:44px;height:21px" viewBox="1608 373 44 21"><text x="1611.25" y="388.75" font-size="12.787" font-weight="bold" font-style="normal" fill="#111" textLength="36.23" lengthAdjust="spacingAndGlyphs" >Statut</text></svg>
<svg class="a" style="left:1609px;top:389px;width:41px;height:22px" viewBox="1609 389 41 22"><text x="1612.50" y="405" font-size="13.300" font-weight="bold" font-style="normal" fill="#111" textLength="33.27" lengthAdjust="spacingAndGlyphs" >retiré</text></svg>
<svg class="a" style="left:1660.75px;top:384px;width:8.5px;height:13.199999999999989px;" viewBox="0 0 8.5 13.2" preserveAspectRatio="none"><path d="M0 4.5 L4.25 0 L8.5 4.5 Z" fill="#c6c6c6"/><path d="M0 8.7 L8.5 8.7 L4.25 13.2 Z" fill="#c6c6c6"/></svg>
<svg class="a" style="left:1702px;top:373px;width:44px;height:21px" viewBox="1702 373 44 21"><text x="1705.50" y="388.75" font-size="12.875" font-weight="bold" font-style="normal" fill="#111" textLength="36.48" lengthAdjust="spacingAndGlyphs" >Statut</text></svg>
<svg class="a" style="left:1682px;top:389px;width:84px;height:22px" viewBox="1682 389 84 22"><text x="1685.75" y="405" font-size="12.946" font-weight="bold" font-style="normal" fill="#111" textLength="76.25" lengthAdjust="spacingAndGlyphs" >endommagé</text></svg>
<svg class="a" style="left:1775px;top:384px;width:8.5px;height:13.199999999999989px;" viewBox="0 0 8.5 13.2" preserveAspectRatio="none"><path d="M0 4.5 L4.25 0 L8.5 4.5 Z" fill="#c6c6c6"/><path d="M0 8.7 L8.5 8.7 L4.25 13.2 Z" fill="#c6c6c6"/></svg>
<svg class="a" style="left:1822px;top:373px;width:35px;height:21px" viewBox="1822 373 35 21"><text x="1825.00" y="388.75" font-size="12.903" font-weight="bold" font-style="normal" fill="#111" textLength="27.97" lengthAdjust="spacingAndGlyphs" >Date</text></svg>
<svg class="a" style="left:1796px;top:389px;width:86px;height:21px" viewBox="1796 389 86 21"><text x="1799.50" y="405" font-size="12.816" font-weight="bold" font-style="normal" fill="#111" textLength="78.53" lengthAdjust="spacingAndGlyphs" >d'acquisition</text></svg>
<svg class="a" style="left:1891px;top:384px;width:8.5px;height:13.199999999999989px;" viewBox="0 0 8.5 13.2" preserveAspectRatio="none"><path d="M0 4.5 L4.25 0 L8.5 4.5 Z" fill="#c6c6c6"/><path d="M0 8.7 L8.5 8.7 L4.25 13.2 Z" fill="#c6c6c6"/></svg>
<div class="a" style="left:71.4px;top:438px;width:118.1px;height:31px;background:#fff;border:1px solid #bdbdbd;border-radius:4px;overflow:hidden"></div>
<div class="a" style="left:72.4px;top:439px;width:108.1px;height:29px;overflow:hidden">
<svg class="a" style="left:6px;top:4px;width:96px;height:21px" viewBox="6 4 96 21"><text x="9.80" y="20" font-size="12.600" font-weight="normal" font-style="normal" fill="#757575" textLength="88.94" lengthAdjust="spacingAndGlyphs" >Recherche Titre</text></svg>
</div>
<div class="a" style="left:227.5px;top:438px;width:68.0px;height:31px;background:#fff;border:1px solid #bdbdbd;border-radius:4px;overflow:hidden"></div>
<div class="a" style="left:228.5px;top:439px;width:58.0px;height:29px;overflow:hidden">
<svg class="a" style="left:6px;top:4px;width:180px;height:21px" viewBox="6 4 180 21"><text x="9.80" y="20" font-size="12.600" font-weight="normal" font-style="normal" fill="#757575" textLength="172.31" lengthAdjust="spacingAndGlyphs" >Recherche Date de publication</text></svg>
</div>
<div class="a" style="left:334.25px;top:438px;width:63.25px;height:31px;background:#fff;border:1px solid #bdbdbd;border-radius:4px;overflow:hidden"></div>
<div class="a" style="left:335.25px;top:439px;width:53.25px;height:29px;overflow:hidden">
<svg class="a" style="left:6px;top:4px;width:112px;height:21px" viewBox="6 4 112 21"><text x="9.80" y="20" font-size="12.600" font-weight="normal" font-style="normal" fill="#757575" textLength="104.36" lengthAdjust="spacingAndGlyphs" >Recherche Éditeur</text></svg>
</div>
<div class="a" style="left:535.5px;top:438px;width:66.0px;height:31px;background:#fff;border:1px solid #bdbdbd;border-radius:4px;overflow:hidden"></div>
<div class="a" style="left:536.5px;top:439px;width:56.0px;height:29px;overflow:hidden">
<svg class="a" style="left:6px;top:4px;width:149px;height:21px" viewBox="6 4 149 21"><text x="9.80" y="20" font-size="12.600" font-weight="normal" font-style="normal" fill="#757575" textLength="141.48" lengthAdjust="spacingAndGlyphs" >Recherche code à barres</text></svg>
</div>
<div class="a" style="left:640.5px;top:438px;width:78.25px;height:31px;background:#fff;border:1px solid #bdbdbd;border-radius:4px;overflow:hidden"></div>
<div class="a" style="left:641.5px;top:439px;width:68.25px;height:29px;overflow:hidden">
<svg class="a" style="left:6px;top:4px;width:117px;height:21px" viewBox="6 4 117 21"><text x="9.80" y="20" font-size="12.600" font-weight="normal" font-style="normal" fill="#757575" textLength="109.25" lengthAdjust="spacingAndGlyphs" >Recherche Numéro</text></svg>
</div>
<div class="a" style="left:757.5px;top:438px;width:49.0px;height:31px;background:#fff;border:1px solid #bdbdbd;border-radius:4px;overflow:hidden"></div>
<div class="a" style="left:758.5px;top:439px;width:39.0px;height:29px;overflow:hidden">
<svg class="a" style="left:6px;top:4px;width:68px;height:21px" viewBox="6 4 68 21"><text x="9.80" y="20" font-size="12.600" font-weight="normal" font-style="normal" fill="#757575" textLength="60.93" lengthAdjust="spacingAndGlyphs" >Recherche</text></svg>
</div>
<div class="a" style="left:844.5px;top:438px;width:27.0px;height:31px;background:#fff;border:1px solid #bdbdbd;border-radius:4px;overflow:hidden"></div>
<div class="a" style="left:845.5px;top:439px;width:17.0px;height:29px;overflow:hidden">
<svg class="a" style="left:6px;top:4px;width:68px;height:21px" viewBox="6 4 68 21"><text x="9.80" y="20" font-size="12.600" font-weight="normal" font-style="normal" fill="#757575" textLength="60.93" lengthAdjust="spacingAndGlyphs" >Recherche</text></svg>
</div>
<div class="a" style="left:1351.25px;top:438px;width:72.5px;height:31px;background:#fff;border:1px solid #bdbdbd;border-radius:4px;overflow:hidden"></div>
<div class="a" style="left:1352.25px;top:439px;width:62.5px;height:29px;overflow:hidden">
<svg class="a" style="left:6px;top:4px;width:117px;height:21px" viewBox="6 4 117 21"><text x="9.80" y="20" font-size="12.600" font-weight="normal" font-style="normal" fill="#757575" textLength="109.25" lengthAdjust="spacingAndGlyphs" >Recherche Numéro</text></svg>
</div>
<div class="a" style="left:1799.25px;top:438px;width:78.25px;height:31px;background:#fff;border:1px solid #bdbdbd;border-radius:4px;overflow:hidden"></div>
<div class="a" style="left:1800.25px;top:439px;width:68.25px;height:29px;overflow:hidden">
<svg class="a" style="left:6px;top:4px;width:99px;height:21px" viewBox="6 4 99 21"><text x="9.80" y="20" font-size="12.600" font-weight="normal" font-style="normal" fill="#757575" textLength="91.05" lengthAdjust="spacingAndGlyphs" >Recherche Date</text></svg>
</div>
<div class="a" style="left:436.25px;top:443px;width:60.5px;height:21px;background:#fff;border:1px solid #6f6f6f;border-radius:2.5px"></div>
<svg class="a" style="left:482.95px;top:449.9px;width:9.199999999999989px;height:6.400000000000034px;" viewBox="0 0 9.2 6.4" preserveAspectRatio="none"><path d="M0.9 0.9 L4.6 4.8 L8.3 0.9" fill="none" stroke="#111" stroke-width="1.9"/></svg>
<div class="a" style="left:910px;top:443px;width:77.5px;height:21px;background:#fff;border:1px solid #6f6f6f;border-radius:2.5px"></div>
<svg class="a" style="left:973.7px;top:449.9px;width:9.199999999999932px;height:6.400000000000034px;" viewBox="0 0 9.2 6.4" preserveAspectRatio="none"><path d="M0.9 0.9 L4.6 4.8 L8.3 0.9" fill="none" stroke="#111" stroke-width="1.9"/></svg>
<div class="a" style="left:1026.25px;top:443px;width:77.5px;height:21px;background:#fff;border:1px solid #6f6f6f;border-radius:2.5px"></div>
<svg class="a" style="left:1089.95px;top:449.9px;width:9.200000000000045px;height:6.400000000000034px;" viewBox="0 0 9.2 6.4" preserveAspectRatio="none"><path d="M0.9 0.9 L4.6 4.8 L8.3 0.9" fill="none" stroke="#111" stroke-width="1.9"/></svg>
<div class="a" style="left:1142.5px;top:443px;width:71.25px;height:21px;background:#fff;border:1px solid #6f6f6f;border-radius:2.5px"></div>
<svg class="a" style="left:1199.95px;top:449.9px;width:9.200000000000045px;height:6.400000000000034px;" viewBox="0 0 9.2 6.4" preserveAspectRatio="none"><path d="M0.9 0.9 L4.6 4.8 L8.3 0.9" fill="none" stroke="#111" stroke-width="1.9"/></svg>
<div class="a" style="left:1252px;top:443px;width:60.5px;height:21px;background:#fff;border:1px solid #6f6f6f;border-radius:2.5px"></div>
<svg class="a" style="left:1298.7px;top:449.9px;width:9.200000000000045px;height:6.400000000000034px;" viewBox="0 0 9.2 6.4" preserveAspectRatio="none"><path d="M0.9 0.9 L4.6 4.8 L8.3 0.9" fill="none" stroke="#111" stroke-width="1.9"/></svg>
<div class="a" style="left:1462px;top:443px;width:36.75px;height:21px;background:#fff;border:1px solid #6f6f6f;border-radius:2.5px"></div>
<svg class="a" style="left:1484.95px;top:449.9px;width:9.200000000000045px;height:6.400000000000034px;" viewBox="0 0 9.2 6.4" preserveAspectRatio="none"><path d="M0.9 0.9 L4.6 4.8 L8.3 0.9" fill="none" stroke="#111" stroke-width="1.9"/></svg>
<div class="a" style="left:1536.25px;top:443px;width:36.25px;height:21px;background:#fff;border:1px solid #6f6f6f;border-radius:2.5px"></div>
<svg class="a" style="left:1558.7px;top:449.9px;width:9.200000000000045px;height:6.400000000000034px;" viewBox="0 0 9.2 6.4" preserveAspectRatio="none"><path d="M0.9 0.9 L4.6 4.8 L8.3 0.9" fill="none" stroke="#111" stroke-width="1.9"/></svg>
<div class="a" style="left:1611.25px;top:443px;width:36.25px;height:21px;background:#fff;border:1px solid #6f6f6f;border-radius:2.5px"></div>
<svg class="a" style="left:1633.7px;top:449.9px;width:9.200000000000045px;height:6.400000000000034px;" viewBox="0 0 9.2 6.4" preserveAspectRatio="none"><path d="M0.9 0.9 L4.6 4.8 L8.3 0.9" fill="none" stroke="#111" stroke-width="1.9"/></svg>
<div class="a" style="left:1685px;top:443px;width:76.75px;height:21px;background:#fff;border:1px solid #6f6f6f;border-radius:2.5px"></div>
<svg class="a" style="left:1747.95px;top:449.9px;width:9.200000000000045px;height:6.400000000000034px;" viewBox="0 0 9.2 6.4" preserveAspectRatio="none"><path d="M0.9 0.9 L4.6 4.8 L8.3 0.9" fill="none" stroke="#111" stroke-width="1.9"/></svg>
<div class="a" style="left:38px;top:488px;width:13px;height:13px;background:#fff;border:1px solid #767676;border-radius:2.5px"></div>
<svg class="a" style="left:72px;top:482px;width:127px;height:21px" viewBox="72 482 127 21"><text x="75.00" y="498" font-size="12.698" font-weight="normal" font-style="normal" fill="#006100" textLength="119.99" lengthAdjust="spacingAndGlyphs" >Cats &amp; dogs 3 : paws</text></svg>
<svg class="a" style="left:72px;top:498px;width:103px;height:22px" viewBox="72 498 103 22"><text x="75.00" y="514" font-size="12.996" font-weight="normal" font-style="normal" fill="#006100" textLength="95.00" lengthAdjust="spacingAndGlyphs" >unite! = Chats et</text></svg>
<svg class="a" style="left:72px;top:514px;width:138px;height:21px" viewBox="72 514 138 21"><text x="75.00" y="530" font-size="12.682" font-weight="normal" font-style="normal" fill="#006100" textLength="130.43" lengthAdjust="spacingAndGlyphs" >chiens 3 : patte dans la</text></svg>
<svg class="a" style="left:72px;top:529px;width:49px;height:22px" viewBox="72 529 49 22"><text x="75.00" y="546" font-size="13.480" font-weight="normal" font-style="normal" fill="#006100" textLength="41.22" lengthAdjust="spacingAndGlyphs" >patte! /</text></svg>
<svg class="a" style="left:285px;top:483px;width:35px;height:20px" viewBox="285 483 35 20"><text x="288.90" y="498" font-size="12.315" font-weight="normal" font-style="normal" fill="#222" textLength="27.40" lengthAdjust="spacingAndGlyphs" >2020</text></svg>
<svg class="a" style="left:334px;top:482px;width:78px;height:21px" viewBox="334 482 78 21"><text x="337.50" y="498" font-size="12.556" font-weight="normal" font-style="normal" fill="#222" textLength="70.00" lengthAdjust="spacingAndGlyphs" >Warner Bros</text></svg>
<svg class="a" style="left:334px;top:498px;width:88px;height:21px" viewBox="334 498 88 21"><text x="337.50" y="514" font-size="12.932" font-weight="normal" font-style="normal" fill="#222" textLength="80.51" lengthAdjust="spacingAndGlyphs" >Entertainment</text></svg>
<svg class="a" style="left:334px;top:515px;width:76px;height:20px" viewBox="334 515 76 20"><text x="337.50" y="530" font-size="12.125" font-weight="normal" font-style="normal" fill="#222" textLength="68.76" lengthAdjust="spacingAndGlyphs" >Canada Inc.,</text></svg>
<svg class="a" style="left:535px;top:482px;width:91px;height:21px" viewBox="535 482 91 21"><text x="538.20" y="498" font-size="12.554" font-weight="normal" font-style="normal" fill="#006100" textLength="83.79" lengthAdjust="spacingAndGlyphs" >447854754665</text></svg>
<svg class="a" style="left:729px;top:482px;width:15px;height:21px" viewBox="729 482 15 21"><text x="732.26" y="498" font-size="12.600" font-weight="normal" font-style="normal" fill="#222" textLength="7.01" lengthAdjust="spacingAndGlyphs" >2</text></svg>
<svg class="a" style="left:910px;top:482px;width:53px;height:21px" viewBox="910 482 53 21"><text x="913.75" y="498" font-size="12.656" font-weight="normal" font-style="normal" fill="#222" textLength="45.72" lengthAdjust="spacingAndGlyphs" >Collecto</text></svg>
<svg class="a" style="left:1026px;top:482px;width:53px;height:21px" viewBox="1026 482 53 21"><text x="1029.50" y="498" font-size="12.725" font-weight="normal" font-style="normal" fill="#222" textLength="45.97" lengthAdjust="spacingAndGlyphs" >Collecto</text></svg>
<svg class="a" style="left:1252px;top:482px;width:85px;height:22px" viewBox="1252 482 85 22"><text x="1255.30" y="498" font-size="13.305" font-weight="normal" font-style="normal" fill="#222" textLength="77.67" lengthAdjust="spacingAndGlyphs" >Monographie</text></svg>
<svg class="a" style="left:1829px;top:482px;width:73px;height:21px" viewBox="1829 482 73 21"><text x="1832.00" y="498" font-size="12.805" font-weight="normal" font-style="normal" fill="#222" textLength="65.51" lengthAdjust="spacingAndGlyphs" >2025-09-16</text></svg>
<div class="a" style="left:38px;top:569px;width:13px;height:13px;background:#fff;border:1px solid #767676;border-radius:2.5px"></div>
<svg class="a" style="left:72px;top:563px;width:127px;height:21px" viewBox="72 563 127 21"><text x="75.00" y="579" font-size="12.698" font-weight="normal" font-style="normal" fill="#006100" textLength="119.99" lengthAdjust="spacingAndGlyphs" >Cats &amp; dogs 3 : paws</text></svg>
<svg class="a" style="left:72px;top:579px;width:103px;height:22px" viewBox="72 579 103 22"><text x="75.00" y="595" font-size="12.996" font-weight="normal" font-style="normal" fill="#006100" textLength="95.00" lengthAdjust="spacingAndGlyphs" >unite! = Chats et</text></svg>
<svg class="a" style="left:72px;top:595px;width:138px;height:21px" viewBox="72 595 138 21"><text x="75.00" y="611" font-size="12.682" font-weight="normal" font-style="normal" fill="#006100" textLength="130.43" lengthAdjust="spacingAndGlyphs" >chiens 3 : patte dans la</text></svg>
<svg class="a" style="left:72px;top:610px;width:49px;height:22px" viewBox="72 610 49 22"><text x="75.00" y="627" font-size="13.480" font-weight="normal" font-style="normal" fill="#006100" textLength="41.22" lengthAdjust="spacingAndGlyphs" >patte! /</text></svg>
<svg class="a" style="left:285px;top:564px;width:35px;height:20px" viewBox="285 564 35 20"><text x="288.90" y="579" font-size="12.315" font-weight="normal" font-style="normal" fill="#222" textLength="27.40" lengthAdjust="spacingAndGlyphs" >2020</text></svg>
<svg class="a" style="left:334px;top:563px;width:78px;height:21px" viewBox="334 563 78 21"><text x="337.50" y="579" font-size="12.556" font-weight="normal" font-style="normal" fill="#222" textLength="70.00" lengthAdjust="spacingAndGlyphs" >Warner Bros</text></svg>
<svg class="a" style="left:334px;top:579px;width:88px;height:21px" viewBox="334 579 88 21"><text x="337.50" y="595" font-size="12.932" font-weight="normal" font-style="normal" fill="#222" textLength="80.51" lengthAdjust="spacingAndGlyphs" >Entertainment</text></svg>
<svg class="a" style="left:334px;top:596px;width:76px;height:20px" viewBox="334 596 76 20"><text x="337.50" y="611" font-size="12.125" font-weight="normal" font-style="normal" fill="#222" textLength="68.76" lengthAdjust="spacingAndGlyphs" >Canada Inc.,</text></svg>
<svg class="a" style="left:535px;top:563px;width:56px;height:21px" viewBox="535 563 56 21"><text x="538.20" y="579" font-size="12.580" font-weight="normal" font-style="normal" fill="#006100" textLength="48.98" lengthAdjust="spacingAndGlyphs" >8857447</text></svg>
<svg class="a" style="left:722px;top:563px;width:22px;height:21px" viewBox="722 563 22 21"><text x="725.26" y="579" font-size="12.600" font-weight="normal" font-style="normal" fill="#222" textLength="14.02" lengthAdjust="spacingAndGlyphs" >13</text></svg>
<svg class="a" style="left:910px;top:563px;width:53px;height:21px" viewBox="910 563 53 21"><text x="913.75" y="579" font-size="12.656" font-weight="normal" font-style="normal" fill="#222" textLength="45.72" lengthAdjust="spacingAndGlyphs" >Collecto</text></svg>
<svg class="a" style="left:1026px;top:563px;width:53px;height:21px" viewBox="1026 563 53 21"><text x="1029.50" y="579" font-size="12.725" font-weight="normal" font-style="normal" fill="#222" textLength="45.97" lengthAdjust="spacingAndGlyphs" >Collecto</text></svg>
<svg class="a" style="left:1142px;top:563px;width:49px;height:21px" viewBox="1142 563 49 21"><text x="1145.00" y="579" font-size="12.806" font-weight="normal" font-style="normal" fill="#222" textLength="41.28" lengthAdjust="spacingAndGlyphs" >Chariot</text></svg>
<svg class="a" style="left:1252px;top:563px;width:85px;height:22px" viewBox="1252 563 85 22"><text x="1255.30" y="579" font-size="13.305" font-weight="normal" font-style="normal" fill="#222" textLength="77.67" lengthAdjust="spacingAndGlyphs" >Monographie</text></svg>
<svg class="a" style="left:1686px;top:563px;width:79px;height:21px" viewBox="1686 563 79 21"><text x="1689.30" y="579" font-size="12.646" font-weight="normal" font-style="normal" fill="#222" textLength="71.70" lengthAdjust="spacingAndGlyphs" >Endommagé</text></svg>
<svg class="a" style="left:1829px;top:563px;width:73px;height:21px" viewBox="1829 563 73 21"><text x="1832.00" y="579" font-size="12.805" font-weight="normal" font-style="normal" fill="#222" textLength="65.51" lengthAdjust="spacingAndGlyphs" >2025-09-29</text></svg>
<div class="a" style="left:38px;top:649px;width:13px;height:13px;background:#fff;border:1px solid #767676;border-radius:2.5px"></div>
<svg class="a" style="left:72px;top:643px;width:127px;height:21px" viewBox="72 643 127 21"><text x="75.00" y="659" font-size="12.698" font-weight="normal" font-style="normal" fill="#006100" textLength="119.99" lengthAdjust="spacingAndGlyphs" >Cats &amp; dogs 3 : paws</text></svg>
<svg class="a" style="left:72px;top:659px;width:103px;height:22px" viewBox="72 659 103 22"><text x="75.00" y="675" font-size="12.996" font-weight="normal" font-style="normal" fill="#006100" textLength="95.00" lengthAdjust="spacingAndGlyphs" >unite! = Chats et</text></svg>
<svg class="a" style="left:72px;top:675px;width:138px;height:21px" viewBox="72 675 138 21"><text x="75.00" y="691" font-size="12.682" font-weight="normal" font-style="normal" fill="#006100" textLength="130.43" lengthAdjust="spacingAndGlyphs" >chiens 3 : patte dans la</text></svg>
<svg class="a" style="left:72px;top:690px;width:49px;height:22px" viewBox="72 690 49 22"><text x="75.00" y="707" font-size="13.480" font-weight="normal" font-style="normal" fill="#006100" textLength="41.22" lengthAdjust="spacingAndGlyphs" >patte! /</text></svg>
<svg class="a" style="left:285px;top:644px;width:35px;height:20px" viewBox="285 644 35 20"><text x="288.90" y="659" font-size="12.315" font-weight="normal" font-style="normal" fill="#222" textLength="27.40" lengthAdjust="spacingAndGlyphs" >2020</text></svg>
<svg class="a" style="left:334px;top:643px;width:78px;height:21px" viewBox="334 643 78 21"><text x="337.50" y="659" font-size="12.556" font-weight="normal" font-style="normal" fill="#222" textLength="70.00" lengthAdjust="spacingAndGlyphs" >Warner Bros</text></svg>
<svg class="a" style="left:334px;top:659px;width:88px;height:21px" viewBox="334 659 88 21"><text x="337.50" y="675" font-size="12.932" font-weight="normal" font-style="normal" fill="#222" textLength="80.51" lengthAdjust="spacingAndGlyphs" >Entertainment</text></svg>
<svg class="a" style="left:334px;top:676px;width:76px;height:20px" viewBox="334 676 76 20"><text x="337.50" y="691" font-size="12.125" font-weight="normal" font-style="normal" fill="#222" textLength="68.76" lengthAdjust="spacingAndGlyphs" >Canada Inc.,</text></svg>
<svg class="a" style="left:535px;top:644px;width:72px;height:20px" viewBox="535 644 72 20"><text x="538.60" y="659" font-size="12.254" font-weight="normal" font-style="normal" fill="#006100" textLength="64.72" lengthAdjust="spacingAndGlyphs" >INLIB12345</text></svg>
<svg class="a" style="left:722px;top:643px;width:22px;height:21px" viewBox="722 643 22 21"><text x="725.26" y="659" font-size="12.600" font-weight="normal" font-style="normal" fill="#222" textLength="14.02" lengthAdjust="spacingAndGlyphs" >14</text></svg>
<svg class="a" style="left:910px;top:643px;width:53px;height:21px" viewBox="910 643 53 21"><text x="913.75" y="659" font-size="12.656" font-weight="normal" font-style="normal" fill="#222" textLength="45.72" lengthAdjust="spacingAndGlyphs" >Collecto</text></svg>
<svg class="a" style="left:1026px;top:643px;width:53px;height:21px" viewBox="1026 643 53 21"><text x="1029.50" y="659" font-size="12.725" font-weight="normal" font-style="normal" fill="#222" textLength="45.97" lengthAdjust="spacingAndGlyphs" >Collecto</text></svg>
<svg class="a" style="left:1142px;top:643px;width:75px;height:21px" viewBox="1142 643 75 21"><text x="1145.40" y="659" font-size="12.709" font-weight="normal" font-style="normal" fill="#222" textLength="67.83" lengthAdjust="spacingAndGlyphs" >Nouveautés</text></svg>
<svg class="a" style="left:1252px;top:643px;width:85px;height:22px" viewBox="1252 643 85 22"><text x="1255.30" y="659" font-size="13.305" font-weight="normal" font-style="normal" fill="#222" textLength="77.67" lengthAdjust="spacingAndGlyphs" >Monographie</text></svg>
<svg class="a" style="left:1829px;top:643px;width:73px;height:21px" viewBox="1829 643 73 21"><text x="1832.00" y="659" font-size="12.805" font-weight="normal" font-style="normal" fill="#222" textLength="65.51" lengthAdjust="spacingAndGlyphs" >2025-09-29</text></svg>
<div class="a" style="left:38px;top:730px;width:13px;height:13px;background:#fff;border:1px solid #767676;border-radius:2.5px"></div>
<svg class="a" style="left:72px;top:724px;width:127px;height:21px" viewBox="72 724 127 21"><text x="75.00" y="740" font-size="12.698" font-weight="normal" font-style="normal" fill="#006100" textLength="119.99" lengthAdjust="spacingAndGlyphs" >Cats &amp; dogs 3 : paws</text></svg>
<svg class="a" style="left:72px;top:740px;width:103px;height:22px" viewBox="72 740 103 22"><text x="75.00" y="756" font-size="12.996" font-weight="normal" font-style="normal" fill="#006100" textLength="95.00" lengthAdjust="spacingAndGlyphs" >unite! = Chats et</text></svg>
<svg class="a" style="left:72px;top:756px;width:138px;height:21px" viewBox="72 756 138 21"><text x="75.00" y="772" font-size="12.682" font-weight="normal" font-style="normal" fill="#006100" textLength="130.43" lengthAdjust="spacingAndGlyphs" >chiens 3 : patte dans la</text></svg>
<svg class="a" style="left:72px;top:771px;width:49px;height:22px" viewBox="72 771 49 22"><text x="75.00" y="788" font-size="13.480" font-weight="normal" font-style="normal" fill="#006100" textLength="41.22" lengthAdjust="spacingAndGlyphs" >patte! /</text></svg>
<svg class="a" style="left:285px;top:725px;width:35px;height:20px" viewBox="285 725 35 20"><text x="288.90" y="740" font-size="12.315" font-weight="normal" font-style="normal" fill="#222" textLength="27.40" lengthAdjust="spacingAndGlyphs" >2020</text></svg>
<svg class="a" style="left:334px;top:724px;width:78px;height:21px" viewBox="334 724 78 21"><text x="337.50" y="740" font-size="12.556" font-weight="normal" font-style="normal" fill="#222" textLength="70.00" lengthAdjust="spacingAndGlyphs" >Warner Bros</text></svg>
<svg class="a" style="left:334px;top:740px;width:88px;height:21px" viewBox="334 740 88 21"><text x="337.50" y="756" font-size="12.932" font-weight="normal" font-style="normal" fill="#222" textLength="80.51" lengthAdjust="spacingAndGlyphs" >Entertainment</text></svg>
<svg class="a" style="left:334px;top:757px;width:76px;height:20px" viewBox="334 757 76 20"><text x="337.50" y="772" font-size="12.125" font-weight="normal" font-style="normal" fill="#222" textLength="68.76" lengthAdjust="spacingAndGlyphs" >Canada Inc.,</text></svg>
<svg class="a" style="left:722px;top:724px;width:22px;height:21px" viewBox="722 724 22 21"><text x="725.26" y="740" font-size="12.600" font-weight="normal" font-style="normal" fill="#222" textLength="14.02" lengthAdjust="spacingAndGlyphs" >21</text></svg>
<svg class="a" style="left:910px;top:724px;width:53px;height:21px" viewBox="910 724 53 21"><text x="913.75" y="740" font-size="12.656" font-weight="normal" font-style="normal" fill="#222" textLength="45.72" lengthAdjust="spacingAndGlyphs" >Collecto</text></svg>
<svg class="a" style="left:1026px;top:724px;width:53px;height:21px" viewBox="1026 724 53 21"><text x="1029.50" y="740" font-size="12.725" font-weight="normal" font-style="normal" fill="#222" textLength="45.97" lengthAdjust="spacingAndGlyphs" >Collecto</text></svg>
<svg class="a" style="left:1142px;top:724px;width:45px;height:21px" viewBox="1142 724 45 21"><text x="1145.10" y="740" font-size="12.767" font-weight="normal" font-style="normal" fill="#222" textLength="37.60" lengthAdjust="spacingAndGlyphs" >Fiction</text></svg>
<svg class="a" style="left:1252px;top:724px;width:85px;height:22px" viewBox="1252 724 85 22"><text x="1255.30" y="740" font-size="13.305" font-weight="normal" font-style="normal" fill="#222" textLength="77.67" lengthAdjust="spacingAndGlyphs" >Monographie</text></svg>
<svg class="a" style="left:1829px;top:724px;width:73px;height:21px" viewBox="1829 724 73 21"><text x="1832.00" y="740" font-size="12.805" font-weight="normal" font-style="normal" fill="#222" textLength="65.51" lengthAdjust="spacingAndGlyphs" >2025-10-02</text></svg>
<div class="a" style="left:38px;top:810px;width:13px;height:13px;background:#fff;border:1px solid #767676;border-radius:2.5px"></div>
<svg class="a" style="left:72px;top:804px;width:127px;height:21px" viewBox="72 804 127 21"><text x="75.00" y="820" font-size="12.698" font-weight="normal" font-style="normal" fill="#006100" textLength="119.99" lengthAdjust="spacingAndGlyphs" >Cats &amp; dogs 3 : paws</text></svg>
<svg class="a" style="left:72px;top:820px;width:103px;height:22px" viewBox="72 820 103 22"><text x="75.00" y="836" font-size="12.996" font-weight="normal" font-style="normal" fill="#006100" textLength="95.00" lengthAdjust="spacingAndGlyphs" >unite! = Chats et</text></svg>
<svg class="a" style="left:72px;top:836px;width:138px;height:21px" viewBox="72 836 138 21"><text x="75.00" y="852" font-size="12.682" font-weight="normal" font-style="normal" fill="#006100" textLength="130.43" lengthAdjust="spacingAndGlyphs" >chiens 3 : patte dans la</text></svg>
<svg class="a" style="left:72px;top:851px;width:49px;height:22px" viewBox="72 851 49 22"><text x="75.00" y="868" font-size="13.480" font-weight="normal" font-style="normal" fill="#006100" textLength="41.22" lengthAdjust="spacingAndGlyphs" >patte! /</text></svg>
<svg class="a" style="left:285px;top:805px;width:35px;height:20px" viewBox="285 805 35 20"><text x="288.90" y="820" font-size="12.315" font-weight="normal" font-style="normal" fill="#222" textLength="27.40" lengthAdjust="spacingAndGlyphs" >2020</text></svg>
<svg class="a" style="left:334px;top:804px;width:78px;height:21px" viewBox="334 804 78 21"><text x="337.50" y="820" font-size="12.556" font-weight="normal" font-style="normal" fill="#222" textLength="70.00" lengthAdjust="spacingAndGlyphs" >Warner Bros</text></svg>
<svg class="a" style="left:334px;top:820px;width:88px;height:21px" viewBox="334 820 88 21"><text x="337.50" y="836" font-size="12.932" font-weight="normal" font-style="normal" fill="#222" textLength="80.51" lengthAdjust="spacingAndGlyphs" >Entertainment</text></svg>
<svg class="a" style="left:334px;top:837px;width:76px;height:20px" viewBox="334 837 76 20"><text x="337.50" y="852" font-size="12.125" font-weight="normal" font-style="normal" fill="#222" textLength="68.76" lengthAdjust="spacingAndGlyphs" >Canada Inc.,</text></svg>
<svg class="a" style="left:722px;top:804px;width:22px;height:21px" viewBox="722 804 22 21"><text x="725.26" y="820" font-size="12.600" font-weight="normal" font-style="normal" fill="#222" textLength="14.02" lengthAdjust="spacingAndGlyphs" >22</text></svg>
<svg class="a" style="left:910px;top:804px;width:53px;height:21px" viewBox="910 804 53 21"><text x="913.75" y="820" font-size="12.656" font-weight="normal" font-style="normal" fill="#222" textLength="45.72" lengthAdjust="spacingAndGlyphs" >Collecto</text></svg>
<svg class="a" style="left:1026px;top:804px;width:53px;height:21px" viewBox="1026 804 53 21"><text x="1029.50" y="820" font-size="12.725" font-weight="normal" font-style="normal" fill="#222" textLength="45.97" lengthAdjust="spacingAndGlyphs" >Collecto</text></svg>
<svg class="a" style="left:1142px;top:804px;width:75px;height:21px" viewBox="1142 804 75 21"><text x="1145.40" y="820" font-size="12.709" font-weight="normal" font-style="normal" fill="#222" textLength="67.83" lengthAdjust="spacingAndGlyphs" >Nouveautés</text></svg>
<svg class="a" style="left:1252px;top:804px;width:85px;height:22px" viewBox="1252 804 85 22"><text x="1255.30" y="820" font-size="13.305" font-weight="normal" font-style="normal" fill="#222" textLength="77.67" lengthAdjust="spacingAndGlyphs" >Monographie</text></svg>
<svg class="a" style="left:1686px;top:804px;width:79px;height:21px" viewBox="1686 804 79 21"><text x="1689.30" y="820" font-size="12.646" font-weight="normal" font-style="normal" fill="#222" textLength="71.70" lengthAdjust="spacingAndGlyphs" >Endommagé</text></svg>
<svg class="a" style="left:1829px;top:804px;width:73px;height:21px" viewBox="1829 804 73 21"><text x="1832.00" y="820" font-size="12.805" font-weight="normal" font-style="normal" fill="#222" textLength="65.51" lengthAdjust="spacingAndGlyphs" >2025-10-02</text></svg>
<div class="a" style="left:1386px;top:296px;width:500px;height:60px;border:5px solid #e60000"></div>
<div class="a" style="left:0px;top:862px;width:1905px;height:34px;background:#fff;border-top:1px solid #a8a8a8"></div>
<svg class="a" style="left:20px;top:868px;width:51px;height:22px" viewBox="20 868 51 22"><text x="23.25" y="885" font-size="13.338" font-weight="normal" font-style="normal" fill="#006100" textLength="43.75" lengthAdjust="spacingAndGlyphs" >English</text></svg>
<svg class="a" style="left:91px;top:869px;width:61px;height:22px" viewBox="91 869 61 22"><text x="94.00" y="885" font-size="13.123" font-weight="bold" font-style="normal" fill="#000" textLength="53.98" lengthAdjust="spacingAndGlyphs" >Français</text></svg>
<div class="a" style="left:1905px;top:0px;width:15px;height:911px;background:#fcfcfc"></div>
<div class="a" style="left:1908px;top:18px;width:9px;height:416px;background:#8b8b8b;border-radius:4.5px"></div>
<svg class="a" style="left:1906px;top:4px;width:13px;height:9px;" viewBox="1906 4 13 9"><path d="M1912.5 5.6 L1916.6 11.6 L1908.4 11.6 Z" fill="#8b8b8b" stroke="#8b8b8b" stroke-width="0.8" stroke-linejoin="round"/></svg>
<svg class="a" style="left:1906px;top:883px;width:13px;height:10px;" viewBox="1906 883 13 10"><path d="M1908.4 885.5 L1916.6 885.5 L1912.5 891.6 Z" fill="#8b8b8b" stroke="#8b8b8b" stroke-width="0.8" stroke-linejoin="round"/></svg>
<div class="a" style="left:0px;top:896px;width:1905px;height:15px;background:#fcfcfc"></div>
<div class="a" style="left:18px;top:899px;width:1575px;height:9px;background:#8b8b8b;border-radius:4.5px"></div>
<svg class="a" style="left:3px;top:897px;width:10px;height:13px;" viewBox="3 897 10 13"><path d="M11.2 899.5 L11.2 907.6 L5.2 903.5 Z" fill="#8b8b8b" stroke="#8b8b8b" stroke-width="0.8" stroke-linejoin="round"/></svg>
<svg class="a" style="left:1891px;top:897px;width:11px;height:13px;" viewBox="1891 897 11 13"><path d="M1893.3 899.5 L1893.3 907.6 L1899.6 903.5 Z" fill="#8b8b8b" stroke="#8b8b8b" stroke-width="0.8" stroke-linejoin="round"/></svg>
</body></html>
